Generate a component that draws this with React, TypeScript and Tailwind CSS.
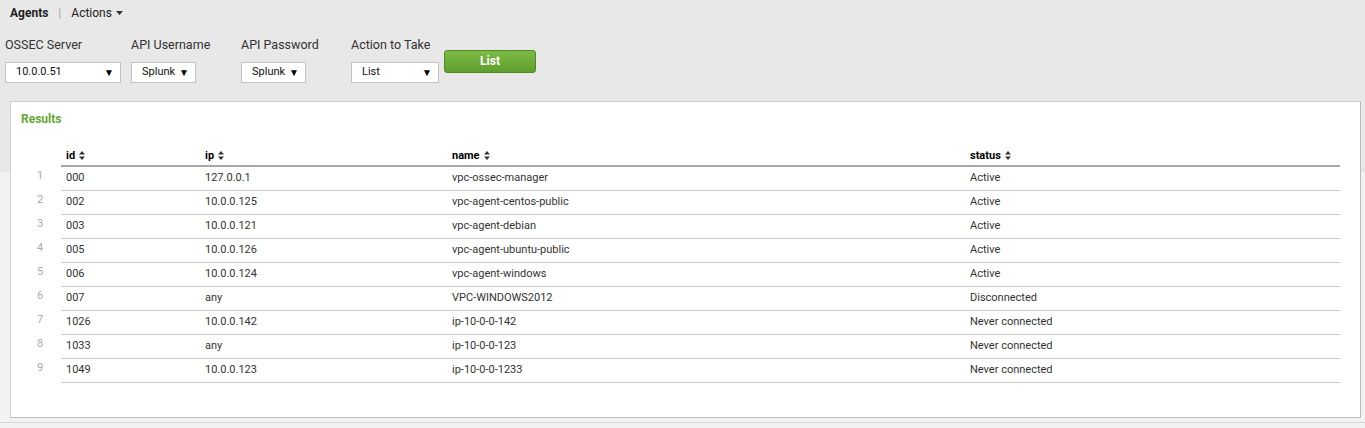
import React from "react";

type Agent = {
  id: string;
  ip: string;
  name: string;
  status: string;
};

const agents: Agent[] = [
  { id: "000", ip: "127.0.0.1", name: "vpc-ossec-manager", status: "Active" },
  { id: "002", ip: "10.0.0.125", name: "vpc-agent-centos-public", status: "Active" },
  { id: "003", ip: "10.0.0.121", name: "vpc-agent-debian", status: "Active" },
  { id: "005", ip: "10.0.0.126", name: "vpc-agent-ubuntu-public", status: "Active" },
  { id: "006", ip: "10.0.0.124", name: "vpc-agent-windows", status: "Active" },
  { id: "007", ip: "any", name: "VPC-WINDOWS2012", status: "Disconnected" },
  { id: "1026", ip: "10.0.0.142", name: "ip-10-0-0-142", status: "Never connected" },
  { id: "1033", ip: "any", name: "ip-10-0-0-123", status: "Never connected" },
  { id: "1049", ip: "10.0.0.123", name: "ip-10-0-0-1233", status: "Never connected" },
];

function SortIcon() {
  return (
    <svg width="6" height="9" viewBox="0 0 6 9" className="ml-[4px] inline-block align-middle">
      <path d="M0 3.5 L3 0 L6 3.5 Z" fill="#333" />
      <path d="M0 5.5 L3 9 L6 5.5 Z" fill="#333" />
    </svg>
  );
}

function Picker({ value, width }: { value: string; width: string }) {
  return (
    <div
      className={`${width} h-[21px] bg-white border border-[#c3c3c3] flex items-center justify-between pl-[10px] pr-[6px] text-[11px] text-[#111]`}
    >
      <span>{value}</span>
      <span className="text-[10px] text-black">▼</span>
    </div>
  );
}

function Field({
  label,
  value,
  width,
  column,
}: {
  label: string;
  value: string;
  width: string;
  column: string;
}) {
  return (
    <div className={`${column} flex flex-col shrink-0`}>
      <label className="text-[12.5px] text-[#333] leading-[16px] h-[17px] whitespace-nowrap">{label}</label>
      <div className="mt-[8px]">
        <Picker value={value} width={width} />
      </div>
    </div>
  );
}

export default function App(): React.ReactElement {
  return (
    <div
      className="w-[1365px] h-[428px] overflow-hidden bg-[linear-gradient(#e8e8e8_0px,#e8e8e8_172px,#f2f2f2_172px)]"
      style={{ fontFamily: "Roboto, 'Liberation Sans', Arial, sans-serif" }}
    >
      <header className="flex items-center h-[26px] pl-[10px] text-[12px]">
        <span className="font-bold text-[#222]">Agents</span>
        <span className="mx-[10px] text-[#aaa]">|</span>
        <span className="text-[#222] flex items-center">
          Actions
          <svg width="7" height="4" viewBox="0 0 7 4" className="ml-[4px]">
            <path d="M0 0 L7 0 L3.5 4 Z" fill="#333" />
          </svg>
        </span>
      </header>

      <section className="flex items-start pl-[5px] pt-[11px]">
        <Field label="OSSEC Server" value="10.0.0.51" width="w-[116px]" column="w-[126px]" />
        <Field label="API Username" value="Splunk" width="w-[65px]" column="w-[110px]" />
        <Field label="API Password" value="Splunk" width="w-[65px]" column="w-[110px]" />
        <Field label="Action to Take" value="List" width="w-[88px]" column="w-[93px]" />
        <button className="mt-[13px] w-[92px] h-[23px] rounded-[3px] border border-[#4f8a25] bg-[linear-gradient(#7dbb45,#5e9e2d)] text-white font-bold text-[12px] leading-none pb-[2px]">
          List
        </button>
      </section>

      <main className="mt-[18px] ml-[10px] mr-[4px] h-[317px] bg-white border border-[#cfcfcf] border-r-[#bbb] border-b-[#bbb] rounded-[1px]">
        <h2 className="text-[12px] font-bold text-[#65a637] pl-[10px] pt-[10px] leading-[14px]">Results</h2>

        <div className="pt-[21px] pr-[20px]">
          <table className="w-full border-collapse text-[11px]">
            <thead>
              <tr className="h-[19px]">
                <th className="w-[50px]" />
                <th className="text-left font-bold text-black pl-[5px] w-[139px] border-b-2 border-[#a8a8a8] align-middle">
                  id<SortIcon />
                </th>
                <th className="text-left font-bold text-black pl-[5px] w-[247px] border-b-2 border-[#a8a8a8] align-middle">
                  ip<SortIcon />
                </th>
                <th className="text-left font-bold text-black pl-[5px] w-[518px] border-b-2 border-[#a8a8a8] align-middle">
                  name<SortIcon />
                </th>
                <th className="text-left font-bold text-black pl-[5px] border-b-2 border-[#a8a8a8] align-middle">
                  status<SortIcon />
                </th>
              </tr>
            </thead>
            <tbody>
              {agents.map((agent, index) => (
                <tr key={agent.id} className="h-[24px]">
                  <td className="text-left pl-[26px] text-[#aaa] align-top pt-[2px]">{index + 1}</td>
                  <td className="pl-[5px] text-[#333] border-b border-[#cfcfcf]">{agent.id}</td>
                  <td className="pl-[5px] text-[#333] border-b border-[#cfcfcf]">{agent.ip}</td>
                  <td className="pl-[5px] text-[#333] border-b border-[#cfcfcf]">{agent.name}</td>
                  <td className="pl-[5px] text-[#333] border-b border-[#cfcfcf]">{agent.status}</td>
                </tr>
              ))}
            </tbody>
          </table>
        </div>
      </main>
      <div className="mt-[4px] h-[1px] bg-[#d6d6d6]" />
    </div>
  );
}
